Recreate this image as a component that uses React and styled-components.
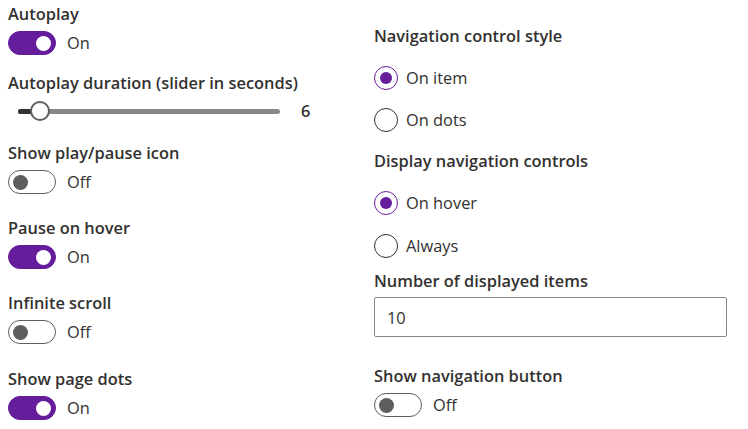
import React from "react";
import styled, { createGlobalStyle } from "styled-components";

const PURPLE = "#661d9c";
const TEXT = "#323130";
const FS = "16.4px";

const Global = createGlobalStyle`
  html, body { margin: 0; padding: 0; background: #fff; }
  body {
    font-family: "Open Sans", "Noto Sans", sans-serif;
    color: ${TEXT};
    font-size: ${FS};
  }
`;

const Page = styled.div`
  display: grid;
  grid-template-columns: 366px 353px;
  padding: 3px 0 0 8px;
  width: 748px;
  box-sizing: border-box;
`;

const Column = styled.div`
  display: flex;
  flex-direction: column;
`;

const Field = styled.div`
  display: flex;
  flex-direction: column;
  margin-top: ${(p) => p.$mt || 0}px;
`;

const Label = styled.div`
  font-size: ${FS};
  font-weight: 600;
  line-height: 22px;
  height: 22px;
  white-space: nowrap;
  margin-top: ${(p) => p.$mt || 0}px;
`;

const ToggleRow = styled.div`
  display: flex;
  align-items: center;
  gap: 11px;
  height: 24px;
  margin-top: ${(p) => (p.$mt == null ? 6 : p.$mt)}px;
`;

const Pill = styled.span`
  box-sizing: border-box;
  width: 48px;
  height: 24px;
  border-radius: 12px;
  display: flex;
  align-items: center;
  justify-content: ${(p) => (p.$on ? "flex-end" : "flex-start")};
  padding: 0 4px;
  background: ${(p) => (p.$on ? PURPLE : "#fff")};
  border: 1px solid ${(p) => (p.$on ? PURPLE : "#605e5c")};
`;

const Thumb = styled.span`
  width: 15px;
  height: 15px;
  border-radius: 50%;
  background: ${(p) => (p.$on ? "#fff" : "#605e5c")};
`;

const StateText = styled.span`
  font-size: ${FS};
  line-height: 22px;
`;

const Toggle = ({ on, mt }) => (
  <ToggleRow $mt={mt}>
    <Pill $on={on}>
      <Thumb $on={on} />
    </Pill>
    <StateText>{on ? "On" : "Off"}</StateText>
  </ToggleRow>
);

const SliderRow = styled.div`
  display: flex;
  align-items: center;
  height: 24px;
  margin-top: 5px;
`;

const SliderBox = styled.div`
  width: 282px;
  box-sizing: border-box;
  padding: 0 10px;
  height: 24px;
  display: flex;
  align-items: center;
`;

const Track = styled.div`
  position: relative;
  flex: 1;
  height: 5px;
  border-radius: 3px;
  background: #8a8886;
`;

const ActiveTrack = styled.div`
  position: absolute;
  left: 0;
  top: 0;
  bottom: 0;
  border-radius: 3px 0 0 3px;
  background: ${TEXT};
`;

const SliderThumb = styled.div`
  position: absolute;
  top: 50%;
  width: 20px;
  height: 20px;
  box-sizing: border-box;
  border-radius: 50%;
  border: 2px solid #605e5c;
  background: #fff;
  transform: translate(-50%, -50%);
`;

const SliderValue = styled.span`
  margin-left: 11px;
  font-size: ${FS};
  font-weight: 600;
  line-height: 22px;
`;

const Slider = ({ value, min, max }) => {
  const pct = ((value - min) / (max - min)) * 100;
  return (
    <SliderRow>
      <SliderBox>
        <Track>
          <ActiveTrack style={{ width: `${pct}%` }} />
          <SliderThumb style={{ left: `${pct}%` }} />
        </Track>
      </SliderBox>
      <SliderValue>{value}</SliderValue>
    </SliderRow>
  );
};

const RadioRow = styled.label`
  display: flex;
  align-items: center;
  gap: 8px;
  height: 32px;
  margin-top: ${(p) => p.$mt || 0}px;
`;

const RadioCircle = styled.span`
  box-sizing: border-box;
  width: 24px;
  height: 24px;
  border-radius: 50%;
  border: 1px solid ${(p) => (p.$checked ? PURPLE : TEXT)};
  display: flex;
  align-items: center;
  justify-content: center;
  &::after {
    content: "";
    width: 12px;
    height: 12px;
    border-radius: 50%;
    background: ${(p) => (p.$checked ? PURPLE : "transparent")};
  }
`;

const RadioText = styled.span`
  font-size: ${FS};
  line-height: 22px;
`;

const Radio = ({ checked, children, mt }) => (
  <RadioRow $mt={mt}>
    <RadioCircle $checked={checked} />
    <RadioText>{children}</RadioText>
  </RadioRow>
);

const TextBox = styled.div`
  box-sizing: border-box;
  height: 40px;
  margin-top: 5px;
  border: 1px solid #8a8886;
  border-radius: 2px;
  padding: 0 12px;
  display: flex;
  align-items: center;
  font-size: ${FS};
`;

export default function App() {
  return (
    <>
      <Global />
      <Page>
        <Column>
          <Field>
            <Label>Autoplay</Label>
            <Toggle on />
          </Field>
          <Field $mt={17}>
            <Label>Autoplay duration (slider in seconds)</Label>
            <Slider value={6} min={1} max={60} />
          </Field>
          <Field $mt={19}>
            <Label>Show play/pause icon</Label>
            <Toggle on={false} />
          </Field>
          <Field $mt={23}>
            <Label>Pause on hover</Label>
            <Toggle on />
          </Field>
          <Field $mt={23}>
            <Label>Infinite scroll</Label>
            <Toggle on={false} />
          </Field>
          <Field $mt={24}>
            <Label>Show page dots</Label>
            <Toggle on />
          </Field>
        </Column>
        <Column>
          <Label $mt={22}>Navigation control style</Label>
          <Radio checked mt={15}>On item</Radio>
          <Radio mt={10}>On dots</Radio>
          <Label $mt={14}>Display navigation controls</Label>
          <Radio checked mt={15}>On hover</Radio>
          <Radio mt={11}>Always</Radio>
          <Label $mt={8}>Number of displayed items</Label>
          <TextBox>10</TextBox>
          <Label $mt={28}>Show navigation button</Label>
          <Toggle on={false} />
        </Column>
      </Page>
    </>
  );
}
